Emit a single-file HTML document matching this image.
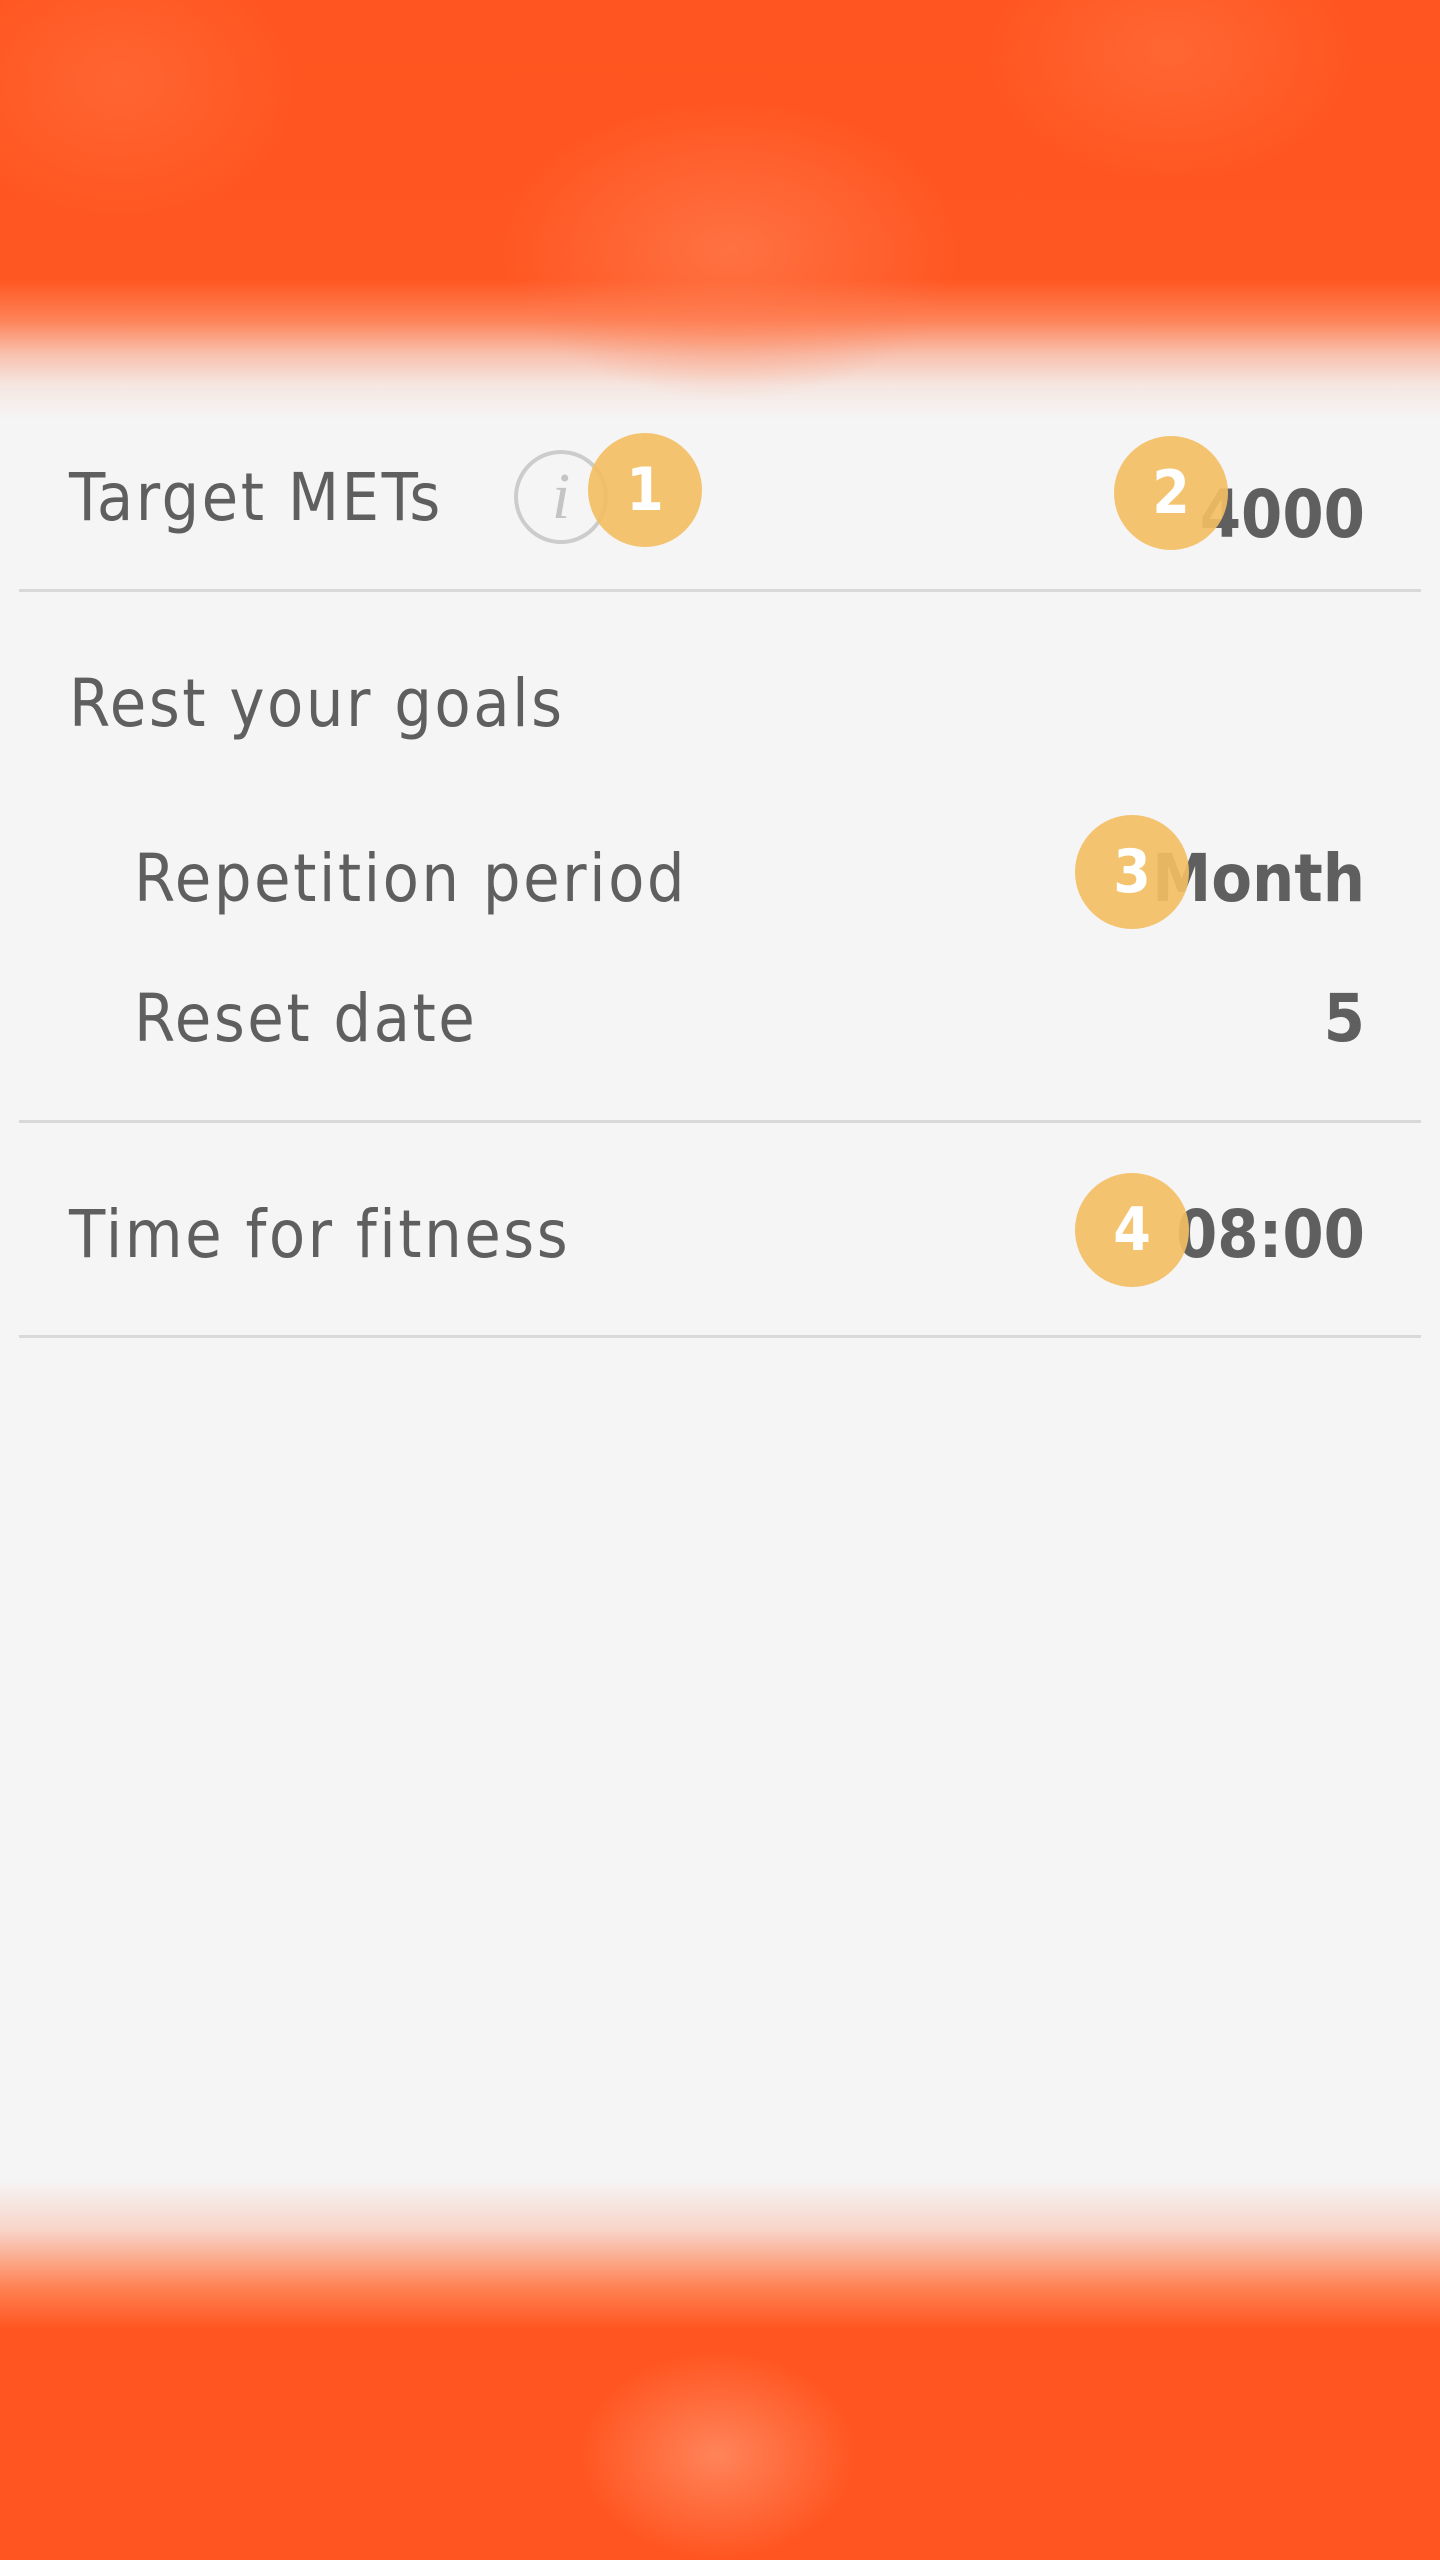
<!DOCTYPE html>
<html><head><meta charset="utf-8"><style>
html,body{margin:0;padding:0}
body{width:1440px;height:2560px;position:relative;overflow:hidden;background:#f5f5f5;font-family:"DejaVu Sans Condensed","Liberation Sans",sans-serif;color:#5f5f5f}
.top{position:absolute;left:0;top:0;width:1440px;height:420px;
background:linear-gradient(#ff5520 0px,#ff5722 280px,rgba(255,110,60,.85) 320px,rgba(250,160,130,.6) 355px,rgba(245,215,205,.5) 385px,rgba(245,245,245,0) 420px)}
.spot{position:absolute;border-radius:50%}
.bot{position:absolute;left:0;top:2180px;width:1440px;height:380px;
background:linear-gradient(rgba(245,245,245,0) 0px,rgba(250,190,170,.6) 50px,rgba(255,120,70,.95) 110px,#ff5520 150px,#ff5520 380px)}
.t{position:absolute;font-size:66px;line-height:1;white-space:nowrap;letter-spacing:2.5px}
.v{position:absolute;right:75px;font-size:66px;font-weight:bold;line-height:1;white-space:nowrap}
.hr{position:absolute;left:19px;width:1402px;height:3px;background:#d9d9d9}
.c{position:absolute;width:114px;height:114px;border-radius:50%;background:rgba(243,190,100,.92);color:#fff;font-weight:bold;font-size:60px;line-height:114px;text-align:center}
.info{position:absolute;left:514px;top:450px;width:86px;height:86px;border:4px solid #cccccc;border-radius:50%;color:#c4c4c4;font-family:"Liberation Serif",serif;font-style:italic;font-size:66px;text-align:center;line-height:86px}
</style></head><body>
<div class="top"></div>
<div class="spot" style="left:500px;top:100px;width:460px;height:300px;background:radial-gradient(closest-side,rgba(255,125,80,.7),rgba(255,125,80,0))"></div>
<div class="spot" style="left:980px;top:-80px;width:380px;height:260px;background:radial-gradient(closest-side,rgba(255,120,70,.5),rgba(255,120,70,0))"></div>
<div class="spot" style="left:-60px;top:-60px;width:360px;height:280px;background:radial-gradient(closest-side,rgba(255,120,70,.45),rgba(255,120,70,0))"></div>
<div class="bot"></div>
<div class="spot" style="left:578px;top:2350px;width:280px;height:210px;background:radial-gradient(closest-side,rgba(255,140,100,.85),rgba(255,110,70,0))"></div>
<div class="t" style="left:69px;top:465px">Target METs</div>
<div class="info">i</div>
<div class="v" style="top:482px">4000</div>
<div class="hr" style="top:589px"></div>
<div class="t" style="left:69px;top:671px">Rest your goals</div>
<div class="t" style="left:134px;top:846px">Repetition period</div>
<div class="v" style="top:846px">Month</div>
<div class="t" style="left:134px;top:986px">Reset date</div>
<div class="v" style="top:986px">5</div>
<div class="hr" style="top:1120px"></div>
<div class="t" style="left:69px;top:1202px">Time for fitness</div>
<div class="v" style="top:1202px">08:00</div>
<div class="hr" style="top:1335px"></div>
<div class="c" style="left:588px;top:433px">1</div>
<div class="c" style="left:1114px;top:436px">2</div>
<div class="c" style="left:1075px;top:815px">3</div>
<div class="c" style="left:1075px;top:1173px">4</div>
</body></html>
